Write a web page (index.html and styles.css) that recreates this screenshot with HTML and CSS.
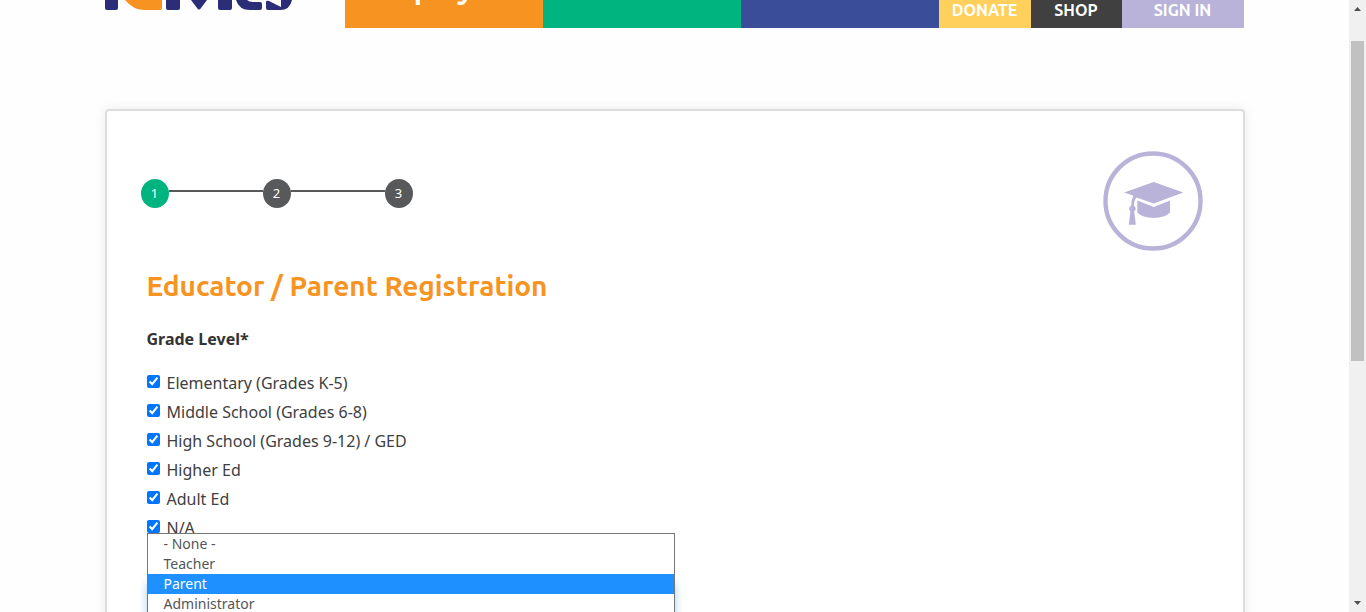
FILE: index.html
```html
<!DOCTYPE html>
<html lang="en">
<head>
<meta charset="utf-8">
<title>Educator / Parent Registration</title>
<link rel="stylesheet" href="styles.css">
</head>
<body>
<div class="viewport">
  <div class="page">
    <header class="site-header">
      <a class="logo" href="#">
        <svg width="188" height="10" viewBox="0 0 188 10" aria-hidden="true">
          <g fill="#2b2d77">
            <path d="M0 0h13v8q0 2-2 2H2Q0 10 0 8z"/>
            <path d="M61 0h14v8q0 2-2 2H63q-2 0-2-2z"/>
            <path d="M86 0h16l-6 8q-2 3-4 0z"/>
            <path d="M113 0h14v8q0 2-2 2h-10q-2 0-2-2z"/>
            <path d="M131 0h11q2 2 6 2h7q2 0 2 2v4q0 2-2 2h-10q-11 0-14-10z"/>
            <path d="M161 2q0-2 3-1l12 6V0h11q-2 10-12 10h-12q-2 0-2-2z"/>
          </g>
          <path fill="#f79421" d="M20 0h37v8q0 2-2 2H40Q28 10 20 0z"/>
        </svg>
      </a>
      <nav class="nav">
        <a class="nav-main play" href="#">play</a>
        <a class="nav-main teach" href="#"></a>
        <a class="nav-main about" href="#"></a>
        <a class="nav-small donate" href="#">DONATE</a>
        <a class="nav-small shop" href="#">SHOP</a>
        <a class="nav-small signin" href="#">SIGN IN</a>
      </nav>
    </header>

    <main class="card">
      <div class="card-top">
        <ol class="steps">
          <li class="step active">1</li>
          <li class="step">2</li>
          <li class="step">3</li>
        </ol>
        <svg class="badge" width="100" height="100" viewBox="0 0 100 100" aria-hidden="true">
          <circle cx="50" cy="50" r="47.5" fill="none" stroke="#b9b3da" stroke-width="4.4"/>
          <g fill="#b9b3da">
            <path d="M21 41.600 50.700 31l29.600 10.600-29.600 10.800-17.200-6-2.500.6-1-2.400z"/>
            <path d="M34.300 49.600 50.700 56 67 49.600v12Q62 67 50.700 67T34.300 61.600z"/>
            <path d="M31 44.500l3 1.200q-3 3-3 9a3.400 3.400 0 0 1 .2 5.800l1.600 13.200h-7l1.600-13.200a3.400 3.400 0 0 1 .8-5.800q0-7 2.800-10.200z"/>
          </g>
        </svg>
      </div>

      <form class="form">
        <h1 class="title">Educator / Parent Registration</h1>
        <fieldset class="grades">
          <legend class="legend">Grade Level*</legend>
          <label class="check"><input type="checkbox" checked>Elementary (Grades K-5)</label>
          <label class="check"><input type="checkbox" checked>Middle School (Grades 6-8)</label>
          <label class="check"><input type="checkbox" checked>High School (Grades 9-12) / GED</label>
          <label class="check"><input type="checkbox" checked>Higher Ed</label>
          <label class="check"><input type="checkbox" checked>Adult Ed</label>
          <label class="check"><input type="checkbox" checked>N/A</label>
        </fieldset>
        <div class="role">
          <select class="role-select" aria-label="Role">
            <option>- None -</option>
            <option>Teacher</option>
            <option selected>Parent</option>
            <option>Administrator</option>
          </select>
          <ul class="role-menu" role="listbox" aria-label="Role">
            <li role="option">- None -</li>
            <li role="option">Teacher</li>
            <li role="option" class="current" aria-selected="true">Parent</li>
            <li role="option">Administrator</li>
          </ul>
        </div>
      </form>
    </main>
  </div>

  <div class="scrollbar" aria-hidden="true">
    <svg width="17" height="17" viewBox="0 0 17 17"><path fill="#505050" d="M5 11l3.500-4 3.500 4z"/></svg>
    <div class="track"><div class="thumb"></div></div>
    <svg width="17" height="17" viewBox="0 0 17 17"><path fill="#505050" d="M5 6l3.500 4L12 6z"/></svg>
  </div>
</div>
</body>
</html>
```
FILE: styles.css
```css
* { box-sizing: border-box; }

body {
  margin: 0;
  background: #fefefe;
  color: #404040;
  font-family: "Noto Sans", sans-serif;
  font-size: 16px;
}

.viewport {
  display: flex;
  height: 100vh;
  overflow: hidden;
}

.page {
  flex: 1;
  min-width: 0;
  overflow: hidden;
}

.site-header {
  display: flex;
  width: 100%;
  max-width: 1140px;
  height: 28px;
  margin: 0 auto;
  padding-right: 1px;
  overflow: hidden;
}

.logo { flex: 0 0 240px; }
.logo svg { display: block; }

.nav {
  display: flex;
  flex: 1;
}

.nav a {
  color: #fff;
  font-family: Ubuntu, "Noto Sans", sans-serif;
  font-weight: 700;
  text-align: center;
  text-decoration: none;
}

.nav-main {
  display: flex;
  flex: 198 1 0;
  align-items: flex-end;
  justify-content: center;
  font-size: 30px;
  line-height: 78px;
}

.nav-small {
  font-size: 16px;
  line-height: 20px;
}

.play { background: #f79421; }
.teach { background: #00b480; }
.about { background: #3a4d98; }
.donate { flex: 92 1 0; background: #ffd15c; }
.shop { flex: 91 1 0; background: #404040; }
.signin { flex: 122 1 0; background: #b9b3da; }

.card {
  width: 100%;
  max-width: 1140px;
  min-height: 640px;
  margin: 81px auto 0;
  padding: 40px;
  background: #fff;
  border: 2px solid #dcdddd;
  border-radius: 4px;
  box-shadow: 0 0 12px rgba(0, 0, 0, 0.08);
}

.card-top {
  display: flex;
  align-items: flex-start;
  justify-content: space-between;
}

.steps {
  display: flex;
  gap: 94px;
  margin: 28px 0 0 -6px;
  padding: 0;
  list-style: none;
}

.step {
  position: relative;
  width: 28px;
  height: 29px;
  background: #58595b;
  border-radius: 50%;
  color: #fff;
  font-size: 13px;
  line-height: 29px;
  text-align: center;
}

.step.active { background: #00b480; }

.step + .step::before {
  content: "";
  position: absolute;
  top: 11px;
  right: 100%;
  width: 94px;
  height: 2px;
  background: #58595b;
}

.title {
  margin: 15px 0 0;
  color: #f79421;
  font-family: Ubuntu, "Noto Sans", sans-serif;
  font-size: 28px;
  font-weight: 700;
  line-height: 40px;
}

.grades {
  display: flex;
  flex-direction: column;
  gap: 5px;
  margin: 21px 0 0;
  padding: 0;
  border: 0;
}

.legend {
  margin-bottom: 20px;
  padding: 0;
  color: #333;
  font-weight: 700;
  line-height: 24px;
}

.check {
  display: flex;
  line-height: 24px;
}

.check input {
  width: 13px;
  height: 13px;
  margin: 4px 7px 0 0;
  accent-color: #0075ff;
}

.role {
  position: relative;
  width: 50%;
  margin-top: 43px;
}

.role-select {
  display: block;
  width: 100%;
  height: 36px;
  border: 1px solid #66afe9;
  outline: 0;
  box-shadow: 0 0 8px rgba(102, 175, 233, 0.6);
}

.role-menu {
  position: absolute;
  bottom: -42px;
  left: 0;
  width: 100%;
  height: 128px;
  margin: 0;
  padding: 0;
  background: #fff;
  border: 1px solid #767676;
  color: #555;
  font-size: 14px;
  line-height: 20px;
  list-style: none;
}

.role-menu li { padding-left: 16px; }

.role-menu .current {
  background: #1e90ff;
  color: #fff;
}

.scrollbar {
  display: flex;
  flex: 0 0 17px;
  flex-direction: column;
  background: #f0f0f0;
}

.scrollbar svg { display: block; }

.track {
  flex: 1;
  padding: 24px 2px 0;
}

.thumb {
  height: 320px;
  background: #c1c1c1;
}
```
